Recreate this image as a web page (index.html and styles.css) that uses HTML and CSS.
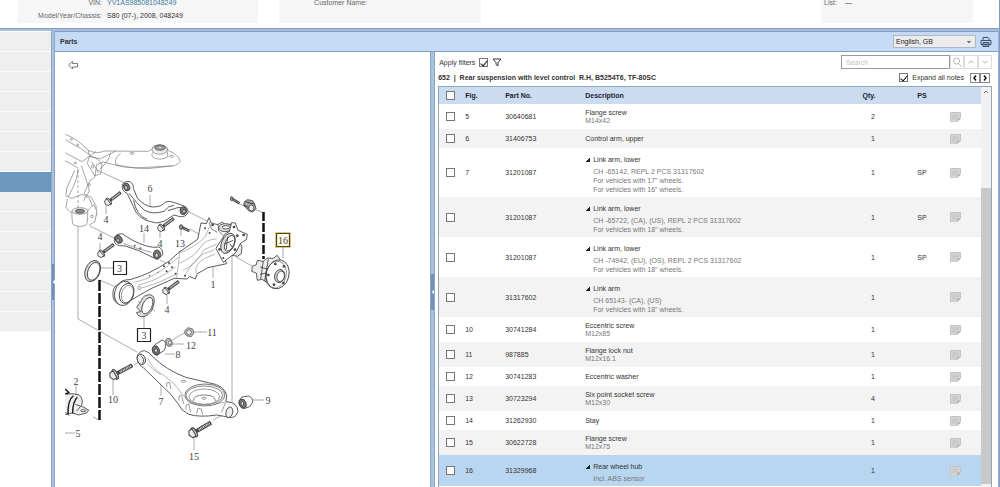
FILE: index.html
```html
<!DOCTYPE html>
<html lang="en">
<head>
<meta charset="utf-8">
<title>Parts</title>
<link rel="stylesheet" href="styles.css">
</head>
<body>
<svg class="defs" aria-hidden="true">
  <symbol id="note" viewBox="0 0 11 10"><path d="M.5 .5h10v6h-3.500v3.500h-6.500z" fill="#d6d6d6" stroke="#c2c2c2"/><path d="M7.500 9.500v-2.500h3z" fill="#aaa"/><path d="M2 3h7M2 5h7M2 7h4" stroke="#b8b8b8" stroke-width=".7"/></symbol>
  <symbol id="left" viewBox="0 0 4 8"><path d="M4 1v6L1 4z" fill="#fff"/></symbol>
</svg>
<div class="app">
  <header class="info">
    <dl class="card card-vehicle">
      <dt>VIN:</dt><dd><a href="#vin">YV1AS985081048249</a></dd>
      <dt>Model/Year/Chassis:</dt><dd>S80 (07-), 2008, 048249</dd>
    </dl>
    <dl class="card card-customer"><dt>Customer Name:</dt><dd></dd><dt></dt><dd></dd></dl>
    <dl class="card card-list"><dt>List:</dt><dd>—</dd><dt></dt><dd></dd></dl>
  </header>
  <div class="work">
    <nav class="side" aria-label="Sections">
      <span></span><span></span><span></span><span></span><span></span><span></span><span></span><span class="current"></span><span></span><span></span><span></span><span></span><span></span><span></span><span></span>
    </nav>
    <div class="splitter"><button type="button" aria-label="Collapse navigation"><svg><use href="#left"/></svg></button></div>
    <main class="parts">
      <div class="bar">
        <h1>Parts</h1>
        <select aria-label="Language"><option>English, GB</option></select>
        <button type="button" class="print" aria-label="Print"><svg viewBox="0 0 12 12" fill="none" stroke="#34526f" stroke-width="1"><path d="M3 4V1.500h5l1 1V4M3 8.500H1V4.500h10v4H9"/><path d="M3 6.500h6v4H3z" fill="#8ea8c4"/><path d="M4 8.500h4"/></svg></button>
      </div>
      <div class="panes">
        <section class="drawing" aria-label="Diagram">
          <svg viewBox="55 53 375 434" width="375" height="434" fill="none" stroke="#666" stroke-width=".8" stroke-linejoin="round">
            <path d="M68.500 66l4-3.500v2h5v3.500h-5v2z" stroke="#555"/>
            <!-- guide lines -->
            <g stroke="#888" stroke-width=".7">
              <path d="M78 227v93l59 33M232 247v160M97 171l28 13M183 210l30 15M90 227l26 13M190 230l31 18M160 261l27 14M236 258l21 12M100 281l20 9M138 302l17 10M254 210l10 4M238 204l8 4M172 341l14-8M189 333h18M169 345h15M165 355h10M244 401h20M65 434h10M93 418l6 3M150 196v14M106 206v9M160 225v14M181 237v-8M144 234v10M100 244v8M213 262v17M167 296v9M100 269h13M144 317v12M283 248v11M76 386v10M161 384v13M113 381v15M194 438v13M134 366l6-4M213 421l10-5"/>
              <path d="M78 171v52" stroke-dasharray="3 2"/>
            </g>
            <path d="M99.500 281v140" stroke="#111" stroke-width="2.500" stroke-dasharray="11 2"/>
            <path d="M263.500 213v47" stroke="#111" stroke-width="2.500" stroke-dasharray="9 2"/>
            <!-- subframe and upper arms -->
            <g transform="translate(60 130) scale(.3333)" stroke="#777" stroke-width="2">
              <path d="M16 16q40 15 68 48 25 12 50 2l130 1 13-7q-3-11 22-12 26 2 23 15l20 10q18 12 19 25-10 14-36 13l-95 6-45-4-55-14-20 8-6 38-14 10q-10 20-18 40l22 10 14 25 2 28-15 16-18-8"/>
              <path d="M16 32l45 26 28 20M16 72l50 26 22-16 20-14M16 95l38 22M84 64l6 18 30 8 48-24M119 120q26-20 33-48M88 82l-6 22 22 36 18-5 4-30-18-18zM94 98l16 22 5 12M54 120q0 32-30 84M64 110q18 50 24 76l-18 30M16 200l20 8 30-12 22 12 14 34M22 210l-4 26 16 16M44 124l-24 54-2 20M182 73q-20 14-14 34l40 8 52 4 78-8M278 70q-6 12 4 17 22 8 42-4l-4-22"/>
              <path d="M36 245q-1 38 4 42 18 10 38 1 6-4 5-42M83 245l18-18 10 20-6 30-18 12" fill="#fff"/>
              <ellipse cx="60" cy="246" rx="24" ry="10" fill="#eee"/><ellipse cx="60" cy="247" rx="14" ry="6" fill="#888" stroke="#444"/>
              <ellipse cx="299" cy="62" rx="23" ry="14" fill="#eee"/><ellipse cx="300" cy="56" rx="16" ry="8" fill="#999" stroke="#444"/><ellipse cx="300" cy="56" rx="6" ry="3" fill="#fff"/>
              <circle cx="34" cy="31" r="3"/><circle cx="53" cy="48" r="3"/><circle cx="46" cy="102" r="3"/><ellipse cx="216" cy="73" rx="6" ry="3"/><ellipse cx="335" cy="82" rx="6" ry="3"/><circle cx="98" cy="113" r="4"/><circle cx="88" cy="167" r="3"/><circle cx="96" cy="262" r="4"/>
              <g stroke="#3c3c3c" stroke-width="2.500" fill="#fff">
                <path d="M187 167q7-12 22-9 12 5 11 20l12 29q20 24 45 27 28 0 38-14 12-6 26 0l28 10q16 5 15 21-8 16-28 11l-14-4-30 19q-22 9-40 1-40-8-52-46l-18-38q-18-8-15-27z"/>
                <path d="M207 193q22 29 45 50 26 15 60 4 14-18 30-18M221 214q8 45 40 57M324 245l22-7q12-6 22 0" fill="none"/>
                <ellipse cx="200" cy="174" rx="9" ry="12" transform="rotate(-20 200 174)" fill="#777"/><ellipse cx="198" cy="176" rx="4" ry="7" fill="#ddd"/>
                <ellipse cx="370" cy="245" rx="10" ry="12" fill="#777"/><ellipse cx="372" cy="247" rx="4" ry="6" fill="#ddd"/>
                <path d="M164 325q7-13 24-10l12 8q38 26 80 32l16-1q14 6 12 23-10 15-28 9-44-24-84-35l-18-1q-20-5-14-25z"/>
                <path d="M190 343q44 18 84 27" fill="none" stroke-width="1.500"/>
                <ellipse cx="176" cy="331" rx="10" ry="13" transform="rotate(-35 176 331)" fill="#777"/><ellipse cx="174" cy="334" rx="4" ry="6" fill="#ddd"/>
                <ellipse cx="291" cy="377" rx="11" ry="14" fill="#777"/><ellipse cx="290" cy="379" rx="5" ry="7" fill="#ddd"/>
                <circle cx="224" cy="350" r="2"/><circle cx="241" cy="358" r="2"/>
              </g>
            </g>
            <!-- trailing arm and knuckle -->
            <g transform="translate(60 220) scale(.3333)" stroke="#3c3c3c" stroke-width="2.500">
              <path d="M176 195q10-14 34-13 60-16 118-56l30-27 55-38 10-49 16 2 8-18 6 16 20 5 14-8 8 8 24-2 10 40-40 55 11 24-56 12-32 18-6 16-18-8-6 8-39-2-70 31-58 33q-15 16-32 15-28-4-24-40 4-18 19-22z" fill="#fff"/>
              <ellipse cx="192" cy="223" rx="28" ry="37" transform="rotate(15 192 223)" fill="#fff"/><ellipse cx="200" cy="223" rx="21" ry="31" transform="rotate(18 200 223)" fill="#fff"/><ellipse cx="202" cy="225" rx="17" ry="27" transform="rotate(18 202 225)" stroke-width="1.500"/>
              <path d="M360 98l-10 78M352 103q50-14 84-50l12-30M358 133q46-20 62-46 14-26 50-27M368 154q36-12 64-62l38-16M374 172q18-38 54-66l36-14M408 163q-6-28 28-46l30-12M224 190q60-12 132-76M236 198q60-14 110-54M246 207q50-14 100-40" stroke="#888" stroke-width="1.800"/>
              <ellipse cx="496" cy="26" rx="20" ry="12" fill="#ddd"/><ellipse cx="498" cy="25" rx="11" ry="5" fill="#fff"/>
              <path d="M538 66l8 18-2 20-12 8-18-4" fill="#eee"/>
              <path d="M496 44l12-6 7-27 11 1 8 22 28 12-3 16-17 10-14 28-38 30-22-42z" fill="#fff"/>
              <ellipse cx="504" cy="73" rx="19" ry="32" transform="rotate(24 504 73)" fill="#ddd"/><ellipse cx="509" cy="73" rx="13" ry="25" transform="rotate(24 509 73)" fill="#fff"/>
              <path d="M492 76l28-12M503 54l-4 38M510 74l8 12" stroke-width="2.500"/>
              <path d="M447 10l8 20 17 10M474 14l2 22 14 14" stroke-width="2"/>
              <g fill="#444" stroke="none"><circle cx="435" cy="28" r="3"/><circle cx="449" cy="42" r="3"/><circle cx="458" cy="18" r="4"/><circle cx="522" cy="24" r="4"/><circle cx="532" cy="50" r="4"/><circle cx="551" cy="48" r="4"/><circle cx="479" cy="91" r="4"/><circle cx="490" cy="117" r="3"/><circle cx="525" cy="92" r="4"/><circle cx="327" cy="132" r="3"/><circle cx="336" cy="145" r="3"/><circle cx="312" cy="142" r="3"/><circle cx="347" cy="164" r="3"/><circle cx="320" cy="157" r="3"/><circle cx="375" cy="170" r="3"/><circle cx="269" cy="170" r="2"/><circle cx="294" cy="160" r="2"/></g>
              <circle cx="238" cy="207" r="5" stroke-width="1.500"/>
              <ellipse cx="98" cy="156" rx="22" ry="33" transform="rotate(22 98 156)" fill="#ddd"/><ellipse cx="101" cy="157" rx="17" ry="28" transform="rotate(22 101 157)" fill="#fff"/>
              <path d="M230 265l14-20q5-18 27-18 17 5 10 32-6 26-29 34-19 2-22-13l13-2z" fill="#ddd"/><ellipse cx="262" cy="260" rx="14" ry="26" transform="rotate(25 262 260)" fill="#fff"/>
            </g>
            <!-- wheel hub and sensor -->
            <g transform="translate(180 180) scale(.3333)" stroke="#3c3c3c" stroke-width="2.500" fill="#eee">
              <path d="M232 244l18 3 12-10 18 1 12-9 8 12-4 58-34 12-16-10-14 3-3-22-14-5 2-15 12-5z"/>
              <path d="M250 246l-8 54M265 240l-11 66M240 264l22 6M240 286l20-4"/>
              <ellipse cx="293" cy="286" rx="34" ry="44" transform="rotate(14 293 286)" fill="#fff"/><ellipse cx="288" cy="287" rx="31" ry="41" transform="rotate(14 288 287)" fill="none" stroke-width="1.500"/>
              <ellipse cx="299" cy="291" rx="15" ry="20" transform="rotate(14 299 291)" fill="#ddd"/><ellipse cx="302" cy="292" rx="11" ry="16" transform="rotate(14 302 292)" fill="#fff"/>
              <g fill="#555"><circle cx="286" cy="255" r="3"/><circle cx="312" cy="262" r="3"/><circle cx="265" cy="288" r="3"/><circle cx="282" cy="317" r="3"/><circle cx="310" cy="312" r="3"/></g>
              <path d="M192 70l10-8 16 3 6 10 4 14-10 10-12-4-14-15z" fill="#aaa"/><ellipse cx="214" cy="87" rx="8" ry="9"/><path d="M196 68l14 4 12 3M191 78l15 7" stroke="#222"/>
              <path d="M155 59l24 14" stroke="#444" stroke-width="8"/><path d="M160 62l20 11" stroke="#ddd" stroke-width="3" stroke-dasharray="2 2"/><ellipse cx="155" cy="59" rx="4" ry="6" fill="#999"/>
              <path d="M4 144l24 12" stroke="#444" stroke-width="8"/><path d="M8 146l19 10" stroke="#ddd" stroke-width="3" stroke-dasharray="2 2"/><ellipse cx="3" cy="144" rx="5" ry="7" fill="#999"/>
            </g>
            <!-- lower arm, bushings -->
            <g transform="translate(60 310) scale(.3333)" stroke="#3c3c3c" stroke-width="2.500">
              <path d="M231 144q6-18 22-19 16 4 24 17 40 40 100 63l68 16q50 8 55 38l-2 19q36 2 36 30-8 25-36 15l-28-5q-50 8-84-2-22-10-32-32-20-30-44-50l-60-58q-18-10-19-32z" fill="#fff"/>
              <path d="M264 147q8 30 50 54 30 20 50 50l24 31q40 14 108-3M262 164q14 18 40 33" stroke="#888" stroke-width="1.800"/>
              <ellipse cx="244" cy="151" rx="12" ry="16" transform="rotate(-20 244 151)" fill="#eee"/><path d="M242 140q14 10 6 24"/>
              <ellipse cx="435" cy="258" rx="60" ry="33" fill="#eee" stroke="#666"/><ellipse cx="433" cy="259" rx="55" ry="28" fill="#fff" stroke="#777"/><ellipse cx="433" cy="263" rx="46" ry="23" stroke="#888"/><path d="M400 276q0-18 32-18 34 0 34 18" stroke="#666"/><ellipse cx="432" cy="268" rx="6" ry="3" stroke-width="1.500"/><ellipse cx="371" cy="217" rx="7" ry="3" stroke-width="1.500"/>
              <path d="M320 234v-12l8-2 5 20M357 275v-14l8-2 6 26M378 302v-13l8-4 6 24M410 314l4-16 10 2 4 17M497 280l-12 30" stroke="#666" stroke-width="2"/>
              <ellipse cx="508" cy="310" rx="10" ry="16" transform="rotate(15 508 310)" fill="#eee"/>
              <path d="M277 120l8-13 21-14q13 2 11 19l-4 12-22 15q-16-4-14-19z" fill="#fff"/><ellipse cx="288" cy="124" rx="10" ry="14" transform="rotate(-20 288 124)" fill="#777"/><ellipse cx="288" cy="125" rx="4" ry="7" fill="#ddd"/>
              <path d="M538 274l8-10 20-3q14 5 11 20l-8 12-18 6q-17-7-13-25z" fill="#fff"/><ellipse cx="548" cy="284" rx="10" ry="14" transform="rotate(-20 548 284)" fill="#777"/><ellipse cx="547" cy="284" rx="4" ry="7" fill="#ddd"/>
              <ellipse cx="327" cy="100" rx="9" ry="13" transform="rotate(-20 327 100)" fill="#bbb" stroke="#666"/><ellipse cx="330" cy="101" rx="4" ry="6" fill="#fff" stroke="#666"/>
              <path d="M375 64l9-8 14 4 4 12-8 11-13-2-7-8z" fill="#bbb" stroke="#666"/><ellipse cx="387" cy="70" rx="7" ry="8" fill="#eee" stroke="#666"/>
              <path d="M16 256l20-2 22 4q14 14 6 33l22 12-6 9-24 6-20-6-20 5M16 310l12 10" fill="#eee"/><path d="M16 240l12 12M16 254l10-2M24 316q-1-43 16-56M38 313q0-35 14-48" stroke="#111" stroke-width="4"/><ellipse cx="70" cy="305" rx="8" ry="3" fill="#fff"/><path d="M46 286l16 6-12 14"/>
            </g>
            <!-- screws: each drawn from the head along the shank -->
            <defs><g id="screw"><path d="M2 0h14" stroke="#444" stroke-width="3.200"/><path d="M5 0h10" stroke="#ddd" stroke-width="1.600" stroke-dasharray=".8 .5"/><ellipse cx="1" cy="0" rx="1.800" ry="4" fill="#ccc" stroke="#444"/><path d="M1-3l-3 0-1.500 3 1.500 3h3z" fill="#eee" stroke="#444"/></g></defs>
            <use href="#screw" transform="translate(108 203) rotate(-37)"/><use href="#screw" transform="translate(161 229) rotate(-37)"/><use href="#screw" transform="translate(101 255) rotate(-37)"/><use href="#screw" transform="translate(166 292) rotate(-37)"/>
            <use href="#screw" transform="translate(114 376) rotate(-28) scale(1.300)"/><use href="#screw" transform="translate(193 434) rotate(-30) scale(1.300)"/>
            <g fill="#fff" stroke="#222" stroke-width="1.200"><rect x="113.500" y="262.500" width="13" height="13"/><rect x="137.500" y="329.500" width="13" height="13"/><rect x="276.500" y="234.500" width="13" height="13" fill="#fffbe8" stroke="#4c4423"/></g>
            <rect x="275.500" y="233.500" width="15" height="15" stroke="#d9b55a" stroke-width=".8"/>
            <g class="callouts">
              <text x="150" y="193">6</text><text x="106" y="224">4</text><text x="144" y="233">14</text><text x="100" y="241">4</text><text x="160" y="248">4</text><text x="180" y="248">13</text><text x="283" y="245">16</text><text x="119.500" y="273">3</text><text x="213" y="289">1</text><text x="167" y="314">4</text><text x="144" y="340">3</text><text x="212" y="337">11</text><text x="191" y="350">12</text><text x="178" y="359">8</text><text x="76" y="386">2</text><text x="113" y="404">10</text><text x="161" y="406">7</text><text x="268" y="405">9</text><text x="78" y="438">5</text><text x="194" y="461">15</text>
            </g>
          </svg>
        </section>
        <div class="splitter"><button type="button" aria-label="Collapse diagram"><svg><use href="#left"/></svg></button></div>
        <section class="list" aria-label="Parts list">
          <div class="tools">
            <label>Apply filters <input type="checkbox" checked></label>
            <svg class="funnel" viewBox="0 0 10 9" fill="#fff" stroke="#333"><path d="M1 1h8L6 4.500v3.500l-2-1.500v-2z"/></svg>
            <div class="search">
              <input type="text" placeholder="Search" aria-label="Search">
              <button type="button" aria-label="Find"><svg viewBox="0 0 10 10"><circle cx="4.500" cy="4" r="3"/><path d="M6.500 6.500l3 3"/></svg></button>
              <button type="button" aria-label="Previous match"><svg viewBox="0 0 10 10"><path d="M2.500 6L5 4l2.500 2"/></svg></button>
              <button type="button" aria-label="Next match"><svg viewBox="0 0 10 10"><path d="M2.500 4L5 6l2.500-2"/></svg></button>
            </div>
          </div>
          <div class="heading">
            <h2>652 &nbsp;|&nbsp; Rear suspension with level control &nbsp;R.H, B5254T6, TF-80SC</h2>
            <label><input type="checkbox" checked> Expand all notes</label>
            <div class="pager">
              <button type="button" aria-label="Previous section"><svg viewBox="0 0 8 8"><path d="M5 1.500L3 4l2 2.500"/></svg></button>
              <button type="button" aria-label="Next section"><svg viewBox="0 0 8 8"><path d="M3 1.500L5 4 3 6.500"/></svg></button>
            </div>
          </div>
          <div class="scroller">
            <div class="rows">
            <table>
              <colgroup><col class="c-check"><col class="c-fig"><col class="c-part"><col><col class="c-qty"><col class="c-ps"><col class="c-note"></colgroup>
              <thead><tr><th><input type="checkbox" aria-label="Select all"></th><th>Fig.</th><th>Part No.</th><th>Description</th><th class="mid">Qty.</th><th class="mid">PS</th><th></th></tr></thead>
              <tbody>
                <tr><td><input type="checkbox" aria-label="Select 30640681"></td><td>5</td><td>30640681</td><td>Flange screw<small>M14x42</small></td><td class="qty">2</td><td class="mid"></td><td><svg class="note"><use href="#note"/></svg></td></tr>
                <tr><td><input type="checkbox" aria-label="Select 31406753"></td><td>6</td><td>31406753</td><td>Control arm, upper</td><td class="qty">1</td><td class="mid"></td><td><svg class="note"><use href="#note"/></svg></td></tr>
                <tr><td><input type="checkbox" aria-label="Select 31201087, fig. 7"></td><td>7</td><td>31201087</td><td class="tree"><b>Link arm, lower</b><small>CH -65142, REPL 2 PCS 31317602</small><small>For vehicles with 17" wheels.</small><small>For vehicles with 16" wheels.</small></td><td class="qty">1</td><td class="mid">SP</td><td><svg class="note"><use href="#note"/></svg></td></tr>
                <tr><td><input type="checkbox" aria-label="Select 31201087, CA and US"></td><td></td><td>31201087</td><td class="tree"><b>Link arm, lower</b><small>CH -65722, (CA), (US), REPL 2 PCS 31317602</small><small>For vehicles with 18" wheels.</small></td><td class="qty">1</td><td class="mid">SP</td><td><svg class="note"><use href="#note"/></svg></td></tr>
                <tr><td><input type="checkbox" aria-label="Select 31201087, EU and OS"></td><td></td><td>31201087</td><td class="tree"><b>Link arm, lower</b><small>CH -74942, (EU), (OS), REPL 2 PCS 31317602</small><small>For vehicles with 18" wheels.</small></td><td class="qty">1</td><td class="mid">SP</td><td><svg class="note"><use href="#note"/></svg></td></tr>
                <tr><td><input type="checkbox" aria-label="Select 31317602"></td><td></td><td>31317602</td><td class="tree"><b>Link arm</b><small>CH 65143- (CA), (US)</small><small>For vehicles with 18" wheels.</small></td><td class="qty">1</td><td class="mid"></td><td><svg class="note"><use href="#note"/></svg></td></tr>
                <tr><td><input type="checkbox" aria-label="Select 30741284"></td><td>10</td><td>30741284</td><td>Eccentric screw<small>M12x85</small></td><td class="qty">1</td><td class="mid"></td><td><svg class="note"><use href="#note"/></svg></td></tr>
                <tr><td><input type="checkbox" aria-label="Select 987885"></td><td>11</td><td>987885</td><td>Flange lock nut<small>M12x16.1</small></td><td class="qty">1</td><td class="mid"></td><td><svg class="note"><use href="#note"/></svg></td></tr>
                <tr><td><input type="checkbox" aria-label="Select 30741283"></td><td>12</td><td>30741283</td><td>Eccentric washer</td><td class="qty">1</td><td class="mid"></td><td><svg class="note"><use href="#note"/></svg></td></tr>
                <tr><td><input type="checkbox" aria-label="Select 30723294"></td><td>13</td><td>30723294</td><td>Six point socket screw<small>M12x30</small></td><td class="qty">4</td><td class="mid"></td><td><svg class="note"><use href="#note"/></svg></td></tr>
                <tr><td><input type="checkbox" aria-label="Select 31262930"></td><td>14</td><td>31262930</td><td>Stay</td><td class="qty">1</td><td class="mid"></td><td><svg class="note"><use href="#note"/></svg></td></tr>
                <tr><td><input type="checkbox" aria-label="Select 30622728"></td><td>15</td><td>30622728</td><td>Flange screw<small>M12x75</small></td><td class="qty">1</td><td class="mid"></td><td><svg class="note"><use href="#note"/></svg></td></tr>
                <tr class="selected"><td><input type="checkbox" aria-label="Select 31329968"></td><td>16</td><td>31329968</td><td class="tree"><b>Rear wheel hub</b><small>Incl. ABS sensor</small></td><td class="qty">1</td><td class="mid"></td><td><svg class="note"><use href="#note"/></svg></td></tr>
              </tbody>
            </table>
            </div>
            <div class="track"><svg viewBox="0 0 10 10"><path d="M3 6l2-2 2 2" fill="none" stroke="#777"/></svg><div class="thumb"></div></div>
          </div>
        </section>
      </div>
    </main>
  </div>
</div>
</body>
</html>
```

FILE: styles.css
```css
* { box-sizing: border-box; }
body { margin: 0; background: #fff; color: #333; font: 7px/9px "Liberation Sans", Arial, sans-serif; }
button, input, select { font: inherit; color: inherit; margin: 0; padding: 0; }
button { border: 0; background: none; display: grid; place-items: center; }
svg { display: block; }
.defs { position: absolute; width: 0; height: 0; }
.app { height: 100vh; display: grid; grid-template-rows: 28px minmax(0, 1fr); border-right: 1px solid #7f9cc0; }

/* Vehicle summary */
.info { display: grid; grid-template-columns: 240px 202px 1fr; column-gap: 21px; padding: 0 26px 5px 18px; overflow: hidden; }
.card { margin: 0; background: #f6f6f6; height: 23px; display: grid; grid-auto-rows: 13px; align-content: end; column-gap: 5px; line-height: 13px; padding-bottom: 1px; white-space: nowrap; }
.card-vehicle { grid-template-columns: 84px 1fr; text-align: right; }
.card-customer { grid-template-columns: 88px 1fr; text-align: right; }
.card-list { grid-template-columns: 16px 1fr; padding-left: 3px; margin-left: auto; width: 152px; }
.card dt { color: #666; }
.card dd { margin: 0; text-align: left; }
.card a { color: #3a7a9c; text-decoration: none; }

.work { display: grid; grid-template-columns: 51px 4px minmax(0, 1fr); border-top: 1px solid #7f9fc4; box-shadow: inset 0 2px #a9bddb; padding-top: 2px; min-height: 0; }
.side { display: flex; flex-direction: column; padding-top: 1px; }
.side span { height: 20px; background: #efefef; border-bottom: 1px solid #fafafa; }
.side .current { background: #6c97bf; border-color: #6c97bf; }
.splitter { background: #abc2dc; border: solid #86a5c8; border-width: 0 1px; }
.splitter button { width: 100%; height: 36px; background: #7590b6; }
.splitter svg { width: 3px; height: 8px; }
.work > .splitter { padding-top: 233px; }
.panes > .splitter { padding-top: 222px; }

.parts { display: grid; grid-template-rows: 21px minmax(0, 1fr); min-height: 0; border-right: 1px solid #9db5d2; }
.bar { display: flex; align-items: center; gap: 4px; background: #c5daf5; border-top: 1px solid #7f9fc4; border-bottom: 1px solid #7f9fc4; padding: 0 6px 0 5px; }
h1, h2 { font: inherit; font-weight: bold; margin: 0; }
.bar h1 { flex: 1; }
.bar select { width: 83px; height: 13px; padding-left: 2px; border: 1px solid #adb9c4; border-radius: 0; color: #222; appearance: none; background: linear-gradient(45deg, transparent 50%, #777 50%) right 6px center / 2px 2px no-repeat, linear-gradient(-45deg, transparent 50%, #777 50%) right 4px center / 2px 2px no-repeat, #ececec; }
.print, .print svg { width: 12px; height: 12px; }
.panes { display: grid; grid-template-columns: 2fr 5px 3fr; min-height: 0; }
.drawing { overflow: hidden; }
.callouts { font: 10px "Liberation Serif", serif; text-anchor: middle; fill: #444; stroke: none; }

/* Parts list */
.list { display: flex; flex-direction: column; min-width: 0; min-height: 0; padding: 3px 6px 0 3px; }
.tools, .heading { display: flex; align-items: center; }
.tools { height: 14px; }
.tools label, .heading label { display: flex; align-items: center; gap: 4px; }
.tools label { padding-left: 1px; }
.funnel { width: 10px; height: 9px; margin-left: 4px; }
.search { display: flex; margin-left: auto; }
.search input { width: 109px; height: 14px; border: 1px solid #999; padding: 0 4px; }
.search input::placeholder { color: #c2c2c2; opacity: 1; }
.search button { width: 14px; height: 14px; border: 1px solid #dcdcdc; }
.search button svg { width: 10px; height: 10px; fill: none; stroke: #b5b5b5; }
.heading { height: 17px; }
.heading h2 { flex: 1; white-space: nowrap; }
.pager { display: flex; margin: 0 2px 0 6px; }
.pager button { width: 10px; height: 10px; border: 1px solid #888; }
.pager svg { width: 8px; height: 8px; fill: none; stroke: #111; stroke-width: 1.5; }
input[type="checkbox"] { appearance: none; display: block; width: 9px; height: 9px; border: 1px solid #777; background: #fff; }
input[type="checkbox"]:checked::after { content: ""; display: block; width: 3px; height: 6px; margin: 0 0 0 2px; border: solid #111; border-width: 0 1px 1px 0; transform: rotate(40deg); }
.scroller { flex: 1; min-height: 0; display: grid; grid-template-columns: minmax(0, 1fr) 10px; border: 1px solid #8fa6bf; border-bottom: 0; }
.rows { overflow: hidden; }
table { width: 100%; table-layout: fixed; border-collapse: collapse; text-align: left; }
.c-check { width: 26px; }
.c-fig { width: 40px; }
.c-part { width: 80px; }
.c-qty { width: 50px; }
.c-ps { width: 56px; }
.c-note { width: 31px; }
th { height: 17px; padding: 0; background: #ccdcf0; color: #223; }
td { padding: 5px 0; }
td:first-child, th:first-child { padding-left: 7px; }
tr:nth-child(even) td { background: #f3f3f3; }
tr.selected td { background: #b8d6ef; }
td:has(small) { line-height: 8px; padding-bottom: 4px; }
small { display: block; font-size: 7px; color: #777; }
th.mid, td.mid { text-align: center; }
td.qty { padding-right: 19px; text-align: right; }
td.tree { padding: 7px 0 3px 8px; line-height: 9px; }
.tree b { display: block; font-weight: normal; line-height: 10px; margin-bottom: 2px; }
.tree b::before { content: ""; float: left; width: 4px; height: 4px; margin: 3px 0 0 -7px; background: linear-gradient(135deg, transparent 50%, #222 50%); }
.note { width: 11px; height: 10px; }
td:last-child { padding: 0; }
.track { background: #f1f1f1; display: flex; flex-direction: column; }
.track svg { width: 10px; height: 10px; }
.thumb { background: #c9c9c9; flex: 1; margin: 91px 0 3px; }
```
